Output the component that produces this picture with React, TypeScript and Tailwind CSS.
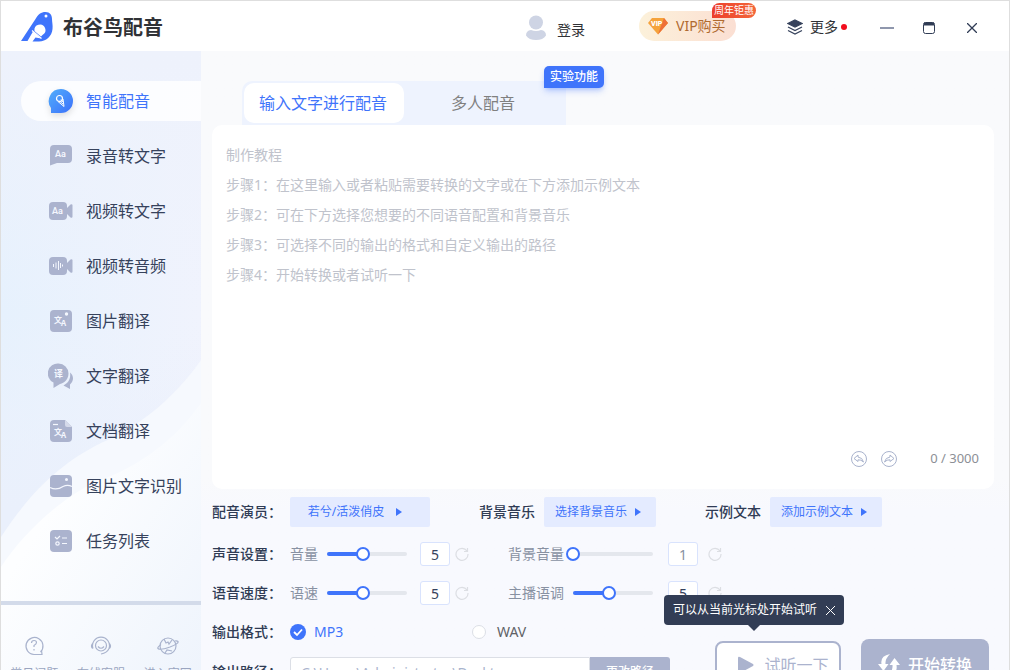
import { useState } from "react";
import type { ReactNode } from "react";

const white = "#f4f7fe";

const BirdLogo = () => (
  <svg width="32" height="30" viewBox="0 0 32 30" aria-hidden="true">
    <path
      d="M0 29 L14.500 7 C17 2.500 20 0 24.500 0 C29 0 31 3 31 7 C31 10 32 13 31.500 17 C31 24 25 29.500 18 29.500 L11.500 29.500 L14.500 25.500 L20 26.500 L12 19.500 L6.500 29 Z"
      fill="#3f74fb"
    />
    <path d="M13.500 19 A5.500 5.500 0 1 1 21.500 23 L20 24.500 L14 19.500 Z" fill="#fff" />
    <path d="M11 18.500 L20.500 26.500" stroke="#fff" strokeWidth="1.200" />
    <circle cx="25" cy="4" r="1.500" fill="#fff" />
  </svg>
);

const VoiceIcon = () => (
  <svg width="26" height="26" viewBox="0 0 26 26" className="drop-shadow-md" aria-hidden="true">
    <defs>
      <linearGradient id="voice" x1="0" y1="0" x2="1" y2="1">
        <stop offset="0" stopColor="#52aefb" />
        <stop offset="1" stopColor="#3b70fb" />
      </linearGradient>
    </defs>
    <path d="M13 1 A12 12 0 1 1 13 25 L3 25 L3 20 A12 12 0 0 1 13 1 Z" fill="url(#voice)" />
    <circle cx="11.500" cy="10.500" r="3" fill="none" stroke="#fff" strokeWidth="1.200" />
    <path d="M10 13.500 L16 18.500 L15 11 M11.500 13 L15 16 M13 11.500 L15 14" fill="none" stroke="#fff" />
  </svg>
);

const IconBox = ({ children }: { children: ReactNode }) => (
  <svg width="26" height="26" viewBox="0 0 26 26" fill="#abb3ce" aria-hidden="true">
    {children}
  </svg>
);

const AaText = ({ x, y }: { x: number; y: number }) => (
  <text x={x} y={y} fill={white} fontSize="9" fontWeight="600" fontFamily="Roboto, sans-serif">
    Aa
  </text>
);

const Translate = ({ y }: { y: number }) => (
  <text x="6" y={y} fill={white} fontSize="8" fontWeight="700" fontFamily="Noto Sans CJK SC, sans-serif">
    文<tspan dx="-1" dy="3">A</tspan>
  </text>
);

const navItems: { label: string; icon: ReactNode }[] = [
  { label: "智能配音", icon: <VoiceIcon /> },
  {
    label: "录音转文字",
    icon: (
      <IconBox>
        <path d="M6 2 h14 a4 4 0 0 1 4 4 v10 a4 4 0 0 1 -4 4 h-11 l-7 2.500 v-16.500 a4 4 0 0 1 4 -4 Z" />
        <AaText x={7} y={14} />
      </IconBox>
    ),
  },
  {
    label: "视频转文字",
    icon: (
      <IconBox>
        <rect x="1" y="4" width="18" height="18" rx="4" />
        <path d="M19 10 l3.500 -3.500 q2 -1 2 1 v11 q0 2 -2 1 l-3.500 -3.500 Z" />
        <AaText x={4} y={16} />
      </IconBox>
    ),
  },
  {
    label: "视频转音频",
    icon: (
      <IconBox>
        <rect x="1" y="4" width="18" height="18" rx="4" />
        <path d="M19 10 l3.500 -3.500 q2 -1 2 1 v11 q0 2 -2 1 l-3.500 -3.500 Z" />
        <path d="M5.500 11 v3 M8 9.500 v6 M10.500 8 v9 M12.500 10 v5 M14.500 11.500 v2" stroke={white} strokeWidth="1" />
      </IconBox>
    ),
  },
  {
    label: "图片翻译",
    icon: (
      <IconBox>
        <rect x="2" y="2" width="22" height="22" rx="4" />
        <Translate y={15} />
        <circle cx="18.500" cy="6" r="1.700" fill={white} />
      </IconBox>
    ),
  },
  {
    label: "文字翻译",
    icon: (
      <IconBox>
        <path d="M22 9.500 C25.500 12 26.500 17.500 22 21.500 V26 L15.500 22.500 C20.500 20 23 15.500 22 9.500 Z" />
        <path d="M10.500 .5 A10 10 0 0 1 20.500 10.500 C20.500 18 14 20.500 12 21 L5.500 25 V19.500 A10 10 0 0 1 10.500 .5 Z" />
        <text x="6" y="14" fill={white} fontSize="9" fontWeight="700" fontFamily="Noto Sans CJK SC, sans-serif">
          译
        </text>
      </IconBox>
    ),
  },
  {
    label: "文档翻译",
    icon: (
      <IconBox>
        <path d="M6 2 h11 l7 7 v11 a4 4 0 0 1 -4 4 h-14 a4 4 0 0 1 -4 -4 v-14 a4 4 0 0 1 4 -4 Z" />
        <path d="M17 2 l7 7 h-5 a2 2 0 0 1 -2 -2 Z" fill="#d5daea" />
        <path d="M5 6.500 h5" stroke={white} strokeWidth="1.200" />
        <Translate y={17} />
      </IconBox>
    ),
  },
  {
    label: "图片文字识别",
    icon: (
      <IconBox>
        <rect x="2" y="2" width="22" height="22" rx="4" />
        <path d="M2 14.500 c6 3 10 1 13 -1 c3 -1.500 6 -1.500 9 0" fill="none" stroke={white} strokeWidth="1.300" />
        <circle cx="18.500" cy="6.500" r="1.500" fill={white} />
      </IconBox>
    ),
  },
  {
    label: "任务列表",
    icon: (
      <IconBox>
        <rect x="2" y="2" width="22" height="22" rx="4" />
        <g fill="none" stroke={white} strokeWidth="1.200">
          <path d="M7 9 l2 2 l3 -3 M14 10 h5 M14 15.500 h5" />
          <circle cx="9.500" cy="15.500" r="1.700" />
        </g>
      </IconBox>
    ),
  },
];

const footerLinks: { label: string; icon: ReactNode }[] = [
  {
    label: "常见问题",
    icon: (
      <>
        <path d="M17.500 17 A8.500 8.500 0 1 0 11 19.500 H19 L18.500 15" />
        <path d="M8.500 8 q0 -2.500 2.500 -2.500 q2.500 0 2.500 2 q0 1.500 -2.500 3 v1.500 M11 14 v1.500" />
      </>
    ),
  },
  {
    label: "在线客服",
    icon: (
      <>
        <circle cx="11" cy="10.500" r="5.500" />
        <path d="M3 13.500 a8.500 8.500 0 1 1 16 0 q-2 4.500 -8 5.500 M2.500 8.500 q-2 2.500 0 5 M19.500 8.500 q2 2.500 0 5 M8 11.500 q3 3.500 6 0" />
      </>
    ),
  },
  {
    label: "进入官网",
    icon: (
      <>
        <circle cx="11" cy="11" r="8" />
        <path d="M4 9.500 q-4 3 -3 4 q2 2 12 -1.500 q9 -3.500 8 -5.500 q-1 -1 -3 -.5 M7 4 l2 4 l2 -1 l1 2 l3 -4 M8 18 l2 -3 l5 1" />
      </>
    ),
  },
];

const placeholder = `制作教程
步骤1：在这里输入或者粘贴需要转换的文字或在下方添加示例文本
步骤2：可在下方选择您想要的不同语音配置和背景音乐
步骤3：可选择不同的输出的格式和自定义输出的路径
步骤4：开始转换或者试听一下`;

const Header = () => (
  <header className="flex h-[50px] shrink-0 items-center bg-white pr-7 pl-5">
    <div className="flex items-center gap-[10px] pt-[2px]">
      <BirdLogo />
      <h1 className="pt-[2px] text-xl leading-6 font-bold text-[#303236]">布谷鸟配音</h1>
    </div>

    <div className="ml-auto flex items-center">
      <button className="flex items-center gap-[10px] pt-[3px] text-sm text-[#303236]">
        <svg width="22" height="26" viewBox="0 0 22 26" fill="#ced4e4" aria-hidden="true">
          <circle cx="11" cy="7.500" r="7" />
          <path d="M1 20.500 Q1 15.500 6 15 Q11 17 16 15 Q21 15.500 21 20.500 Q18 25 11 25 Q4 25 1 20.500 Z" />
        </svg>
        <span className="pt-1">登录</span>
      </button>

      <button className="relative ml-[54px] flex h-[30px] w-[97px] items-center gap-2 rounded-full bg-linear-to-r from-[#fcf1da] to-[#fbdfd3] pl-[9px] text-sm text-[#b06a30]">
        <svg width="20" height="18" viewBox="0 0 20 18" aria-hidden="true">
          <path d="M4 1 H16 L20 6 L10 17.500 L0 6 Z" fill="#f5a33b" />
          <path d="M16 1 L20 6 L10 17.500 L14 6 Z" fill="#ee7038" />
          <text x="3" y="9" fontSize="7" fontWeight="900" fill="#fff" fontFamily="Roboto, sans-serif">
            VIP
          </text>
        </svg>
        VIP购买
        <span className="absolute -top-2 left-[73px] h-[15px] w-11 rounded-full rounded-bl-none bg-linear-to-r from-[#ec3d2c] to-[#f3663a] text-center text-[10px] leading-[15px] text-white">
          周年钜惠
        </span>
      </button>

      <button className="ml-[51px] flex items-center gap-[7px] pt-[2px] text-sm text-[#303236]">
        <svg width="16" height="16" viewBox="0 0 16 16" fill="none" stroke="#36425c" strokeWidth="1.300" aria-hidden="true">
          <path d="M8 1 L15 4.500 L8 8 L1 4.500 Z" fill="#36425c" />
          <path d="M1 8 L8 11.500 L15 8 M1 11.500 L8 15 L15 11.500" />
        </svg>
        更多
        <i className="-ml-1 size-[6px] rounded-full bg-[#f20d1d]" />
      </button>

      <div className="ml-[31px] flex items-center pt-1 text-[#303c55]">
        <button aria-label="最小化" className="grid h-6 w-[18px] place-items-center">
          <svg width="14" height="2" viewBox="0 0 14 2">
            <rect width="14" height="2" fill="#8f97ad" />
          </svg>
        </button>
        <button aria-label="最大化" className="ml-6 grid h-6 w-[18px] place-items-center">
          <svg width="12" height="12" viewBox="0 0 12 12" fill="none" stroke="currentColor">
            <rect x=".5" y=".5" width="11" height="11" rx="2" />
            <path d="M1 2 H11" strokeWidth="3" />
          </svg>
        </button>
        <button aria-label="关闭" className="ml-[25px] grid h-6 w-[18px] place-items-center">
          <svg width="10" height="10" viewBox="0 0 10 10" stroke="currentColor" strokeWidth="1.300">
            <path d="M0 0 L10 10 M10 0 L0 10" />
          </svg>
        </button>
      </div>
    </div>
  </header>
);

const Sidebar = () => (
  <aside className="relative flex w-[200px] shrink-0 flex-col bg-linear-to-r from-[#e6f1fd] to-[#f0f3fd]">
    {/* Backdrop waves */}
    <svg className="absolute inset-0 size-full" viewBox="0 0 200 658" preserveAspectRatio="none" aria-hidden="true">
      <defs>
        <linearGradient id="top" x1="0" y1="0" x2="0" y2="1">
          <stop offset="0" stopColor="#eef2fc" />
          <stop offset=".4" stopColor="#eef2fc" stopOpacity="0" />
          <stop offset=".7" stopColor="#eaf0fc" />
        </linearGradient>
        <linearGradient id="wave" x1="0" y1="0" x2="1" y2="1">
          <stop offset=".3" stopColor="#fdfeff" />
          <stop offset="1" stopColor="#edf3fc" />
        </linearGradient>
      </defs>
      <rect width="200" height="658" fill="url(#top)" />
      <path d="M0 486 C30 440 60 412 100 392 C140 375 175 345 200 309 V658 H0 Z" fill="#f6f9fe" />
      <path d="M0 516 C20 485 60 445 100 429 C150 410 180 380 200 352 V658 H0 Z" fill="url(#wave)" />
    </svg>

    <nav className="relative flex flex-1 flex-col gap-[15px] pt-[30px] pl-5">
      {navItems.map((item, i) => (
        <a
          key={item.label}
          href="#"
          className={
            i === 0
              ? "flex h-10 items-center gap-3 rounded-l-full bg-white/85 pl-[27px] text-base text-[#3f74fb]"
              : "flex h-10 items-center gap-3 pl-[27px] text-base text-[#36425c]"
          }
        >
          {item.icon}
          {item.label}
        </a>
      ))}
    </nav>

    <div className="relative mt-10 flex h-[108px] shrink-0 border-t-4 border-[#d3dbea] pt-[30px]">
      {footerLinks.map((l) => (
        <a key={l.label} href="#" className="flex flex-1 flex-col items-center gap-[9px] text-xs text-[#9aa5c0]">
          <svg width="22" height="22" viewBox="0 0 22 22" fill="none" stroke="#a9b3cd" strokeWidth="1.200" aria-hidden="true">
            {l.icon}
          </svg>
          {l.label}
        </a>
      ))}
    </div>
  </aside>
);

const PickButton = ({ label, wide = false }: { label: string; wide?: boolean }) => (
  <button
    className={
      wide
        ? "flex h-[30px] w-[140px] items-center justify-center gap-3 rounded-[2px] bg-[#e4ebff] pr-[10px] text-xs text-[#3f74fb]"
        : "flex h-[30px] w-28 items-center justify-center gap-2 rounded-[2px] bg-[#e4ebff] pr-1 text-xs text-[#3f74fb]"
    }
  >
    {label}
    <svg width="6" height="8" viewBox="0 0 6 8" fill="currentColor" aria-hidden="true">
      <path d="M0 0 L6 4 L0 8 Z" />
    </svg>
  </button>
);

type SettingProps = {
  id: string;
  label: string;
  initial: number;
  second?: boolean;
  muted?: boolean;
};

const Setting = ({ id, label, initial, second = false, muted = false }: SettingProps) => {
  const [value, setValue] = useState(initial);

  return (
    <div className="flex items-center">
      <label htmlFor={id} className={second ? "w-[65px] text-sm text-[#8891a2]" : "w-[37px] text-sm text-[#8891a2]"}>
        {label}
      </label>
      <div className="grid w-20 grid-cols-[80px] items-center">
        <span className="h-1 rounded-full bg-[#e4e7ed] [grid-area:1/1]" />
        <span
          className="h-1 rounded-full bg-[#3f74fb] [grid-area:1/1]"
          style={{ width: `${((value - 1) / 9) * 100}%` }}
        />
        <input
          id={id}
          type="range"
          min={1}
          max={10}
          value={value}
          onChange={(e) => setValue(Number(e.target.value))}
          className="-ml-[7px] h-[14px] w-[94px] appearance-none bg-transparent [grid-area:1/1] [&::-webkit-slider-thumb]:size-[14px] [&::-webkit-slider-thumb]:appearance-none [&::-webkit-slider-thumb]:rounded-full [&::-webkit-slider-thumb]:border-2 [&::-webkit-slider-thumb]:border-[#3f74fb] [&::-webkit-slider-thumb]:bg-white"
        />
      </div>
      <input
        aria-label={label}
        value={value}
        onChange={(e) => setValue(Number(e.target.value) || 1)}
        className={`h-6 w-[30px] rounded-[3px] border border-[#d9e3fd] bg-white text-center text-sm ${
          second ? "ml-[15px]" : "ml-[13px]"
        } ${muted ? "text-[#8891a2]" : "text-[#36425c]"}`}
      />
      <button
        aria-label="重置"
        onClick={() => setValue(initial)}
        className={second ? "ml-[10px] text-[#dcdee3]" : "ml-[5px] text-[#dcdee3]"}
      >
        <svg width="14" height="14" viewBox="0 0 14 14" fill="none" stroke="currentColor" strokeWidth="1.200">
          <path d="M12 4 A6 6 0 1 0 13 7 M12.500 1 V4.500 H9" />
        </svg>
      </button>
    </div>
  );
};

const RowLabel = ({ children }: { children: ReactNode }) => (
  <span className="w-[78px] shrink-0 text-sm font-medium text-[#303c55]">{children}</span>
);

const Editor = () => {
  const [text, setText] = useState("");

  return (
    <section className="flex min-h-[364px] flex-1 flex-col rounded-[10px] bg-white">
      <textarea
        aria-label="配音文字"
        maxLength={3000}
        value={text}
        onChange={(e) => setText(e.target.value)}
        placeholder={placeholder}
        className="w-full flex-1 resize-none bg-transparent px-[14px] pt-[15px] text-sm leading-[30px] text-[#36425c] outline-none placeholder:text-[#c0c3cc]"
      />
      <div className="flex h-[60px] items-center justify-end pr-[15px] text-[#a9b3cd]">
        <button aria-label="撤销">
          <svg width="18" height="18" viewBox="0 0 18 18" fill="none" stroke="currentColor">
            <circle cx="9" cy="9" r="7.500" />
            <path d="M8 5 L4 8.500 L8 11.500 V9.800 Q11 9.500 13.500 12 Q12.500 7.500 8 7 Z" />
          </svg>
        </button>
        <button aria-label="重做" className="ml-3">
          <svg width="18" height="18" viewBox="0 0 18 18" fill="none" stroke="currentColor">
            <circle cx="9" cy="9" r="7.500" />
            <path d="M10 5 L14 8.500 L10 11.500 V9.800 Q7 9.500 4.500 12 Q5.500 7.500 10 7 Z" />
          </svg>
        </button>
        <span className="ml-8 text-[13px] text-[#8c8f96]">{text.length} / 3000</span>
      </div>
    </section>
  );
};

const App = () => {
  const [format, setFormat] = useState("MP3");
  const [tip, setTip] = useState(true);

  return (
    <div className="flex h-screen flex-col overflow-hidden border-x border-t border-[#dedede] bg-[#f9fafc] font-['Noto_Sans','Noto_Sans_CJK_SC',sans-serif]">
      <Header />
      <div className="flex flex-1">
        <Sidebar />

        <main className="flex flex-1 flex-col bg-linear-to-b from-[#f9fafc] from-65% to-[#f8f9fe] to-70% pr-[15px] pb-[18px] pl-[11px]">
          <div className="mt-[30px] ml-[30px] flex h-11 w-[324px] shrink-0 rounded-tl-[10px] bg-[#eef3fe] p-[2px]">
            <button className="w-40 rounded-[10px] bg-white pr-[2px] text-base text-[#3f74fb]">输入文字进行配音</button>
            <button className="relative flex-1 pr-[2px] text-base text-[#808080]">
              多人配音
              <span className="absolute -top-[17px] left-[140px] h-[22px] w-[60px] rounded-[5px] rounded-bl-none bg-[#3f74fb] text-center text-xs leading-[22px] font-medium text-white shadow-md shadow-[#3f74fb]/30">
                实验功能
              </span>
            </button>
          </div>

          <Editor />

          <div className="mt-2 flex h-[30px] shrink-0 items-center">
            <RowLabel>配音演员：</RowLabel>
            <PickButton label="若兮/活泼俏皮" wide />
            <span className="mr-[9px] ml-[49px] text-sm font-medium text-[#303c55]">背景音乐</span>
            <PickButton label="选择背景音乐" />
            <span className="mr-[9px] ml-[49px] text-sm font-medium text-[#303c55]">示例文本</span>
            <PickButton label="添加示例文本" />
          </div>

          <div className="mt-[15px] flex h-6 shrink-0 items-center gap-[39px]">
            <div className="flex items-center">
              <RowLabel>声音设置：</RowLabel>
              <Setting id="volume" label="音量" initial={5} />
            </div>
            <Setting id="bgm-volume" label="背景音量" initial={1} second muted />
          </div>

          <div className="mt-[15px] flex h-6 shrink-0 items-center gap-[39px]">
            <div className="flex items-center">
              <RowLabel>语音速度：</RowLabel>
              <Setting id="speed" label="语速" initial={5} />
            </div>
            <Setting id="pitch" label="主播语调" initial={5} second />
          </div>

          <div className="mt-[15px] flex shrink-0 items-start justify-between pr-[5px]">
            <div className="w-[458px]">
              <div className="flex h-6 items-center">
                <RowLabel>输出格式：</RowLabel>
                {["MP3", "WAV"].map((f) => (
                  <label
                    key={f}
                    className={`flex w-[181px] items-center text-sm ${
                      format === f ? "gap-2 text-[#3f74fb]" : "gap-[10px] text-[#606266]"
                    }`}
                  >
                    <input
                      type="radio"
                      name="format"
                      checked={format === f}
                      onChange={() => setFormat(f)}
                      className="peer sr-only"
                    />
                    <svg width="16" height="16" viewBox="0 0 16 16" fill="none" aria-hidden="true">
                      {format === f ? (
                        <>
                          <circle cx="8" cy="8" r="8" fill="#3f74fb" />
                          <path d="M4 8 L7 11 L12 5.500" stroke="#fff" strokeWidth="1.800" />
                        </>
                      ) : (
                        <circle cx="8" cy="8" r="6.500" fill="#fff" stroke="#dcdfe6" />
                      )}
                    </svg>
                    {f}
                  </label>
                ))}
              </div>
              <div className="mt-[13px] flex h-[30px] items-center">
                <RowLabel>输出路径：</RowLabel>
                <input
                  aria-label="输出路径"
                  defaultValue="C:\Users\Administrator\Desktop"
                  className="h-full min-w-0 flex-1 rounded-l-[3px] border border-[#dcdfe6] bg-white px-[10px] text-sm text-[#a9b3cd]"
                />
                <button className="h-full w-20 rounded-r-[3px] bg-[#abb3ce] text-xs font-medium text-white">更改路径</button>
              </div>
            </div>

            <div className="mt-[19px] flex items-center gap-5">
              <div className="relative">
                <button className="flex h-12 w-[126px] items-center justify-center gap-[10px] rounded-lg border-2 border-[#abb3ce] bg-white pl-[10px] text-base text-[#abb3ce]">
                  <svg width="17" height="18" viewBox="0 0 17 18" fill="currentColor" aria-hidden="true">
                    <path d="M1 2 Q1 0 3 1 L16 8 Q17 9 16 10 L3 17 Q1 18 1 16 Z" />
                  </svg>
                  试听一下
                </button>
                {tip && (
                  <div className="absolute -top-[46px] -left-[51px] flex h-[30px] w-[180px] items-center rounded-[4px] bg-[#323d55] pl-[9px] text-xs whitespace-nowrap text-white">
                    可以从当前光标处开始试听
                    <button aria-label="关闭提示" onClick={() => setTip(false)} className="ml-[9px]">
                      <svg width="9" height="9" viewBox="0 0 9 9" stroke="currentColor">
                        <path d="M0 0 L9 9 M9 0 L0 9" />
                      </svg>
                    </button>
                    <svg className="absolute top-full left-[84px]" width="12" height="6" viewBox="0 0 12 6" aria-hidden="true">
                      <path d="M0 0 H12 L6 6 Z" fill="#323d55" />
                    </svg>
                  </div>
                )}
              </div>
              <button className="flex h-[52px] w-32 items-center justify-center gap-2 rounded-lg bg-[#abb3ce] text-base font-medium text-white">
                <svg width="22" height="22" viewBox="0 0 22 22" fill="currentColor" aria-hidden="true">
                  <path d="M12 0 Q2 2 3.500 10 H0 L5.500 17 L10.500 10 H7.500 Q7 5 12 0 Z" />
                  <path d="M10 22 Q20 20 18.500 11 H22 L16.500 4 L11.500 11 H14.500 Q15 17 10 22 Z" />
                </svg>
                开始转换
              </button>
            </div>
          </div>
        </main>
      </div>
    </div>
  );
};

export default App;
